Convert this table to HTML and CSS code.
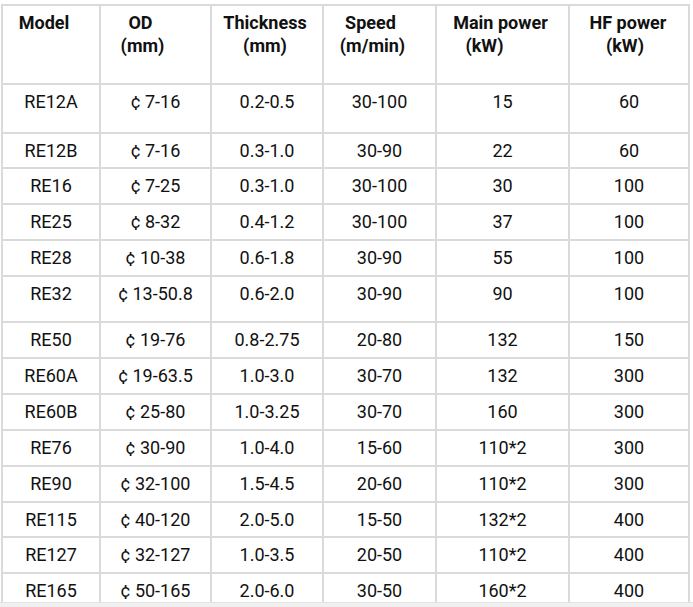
FILE: index.html
```html
<!DOCTYPE html>
<html>
<head>
<meta charset="utf-8">
<link rel="stylesheet" href="styles.css">
</head>
<body>
<div class="wrap">
<table class="spec">
<colgroup>
<col class="c1"><col class="c2"><col class="c3"><col class="c4"><col class="c5"><col class="c6">
</colgroup>
<tr class="head">
<th><span class="l sh7">Model</span></th>
<th><span class="l sh14">OD</span><span class="l sh13">(mm)</span></th>
<th><span class="l sh2">Thickness</span><span class="l sh2">(mm)</span></th>
<th><span class="l sh9">Speed</span><span class="l sh7">(m/min)</span></th>
<th><span class="l sh2">Main power</span><span class="l sh18">(kW)</span></th>
<th><span class="l sh1">HF power</span><span class="l sh4">(kW)</span></th>
</tr>
<tr class="tall1"><td>RE12A</td><td>¢ 7-16</td><td>0.2-0.5</td><td>30-100</td><td>15</td><td>60</td></tr>
<tr class="r35"><td>RE12B</td><td>¢ 7-16</td><td>0.3-1.0</td><td>30-90</td><td>22</td><td>60</td></tr>
<tr><td>RE16</td><td>¢ 7-25</td><td>0.3-1.0</td><td>30-100</td><td>30</td><td>100</td></tr>
<tr><td>RE25</td><td>¢ 8-32</td><td>0.4-1.2</td><td>30-100</td><td>37</td><td>100</td></tr>
<tr><td>RE28</td><td>¢ 10-38</td><td>0.6-1.8</td><td>30-90</td><td>55</td><td>100</td></tr>
<tr class="tall2"><td>RE32</td><td>¢ 13-50.8</td><td>0.6-2.0</td><td>30-90</td><td>90</td><td>100</td></tr>
<tr><td>RE50</td><td>¢ 19-76</td><td>0.8-2.75</td><td>20-80</td><td>132</td><td>150</td></tr>
<tr><td>RE60A</td><td>¢ 19-63.5</td><td>1.0-3.0</td><td>30-70</td><td>132</td><td>300</td></tr>
<tr><td>RE60B</td><td>¢ 25-80</td><td>1.0-3.25</td><td>30-70</td><td>160</td><td>300</td></tr>
<tr><td>RE76</td><td>¢ 30-90</td><td>1.0-4.0</td><td>15-60</td><td>110*2</td><td>300</td></tr>
<tr><td>RE90</td><td>¢ 32-100</td><td>1.5-4.5</td><td>20-60</td><td>110*2</td><td>300</td></tr>
<tr class="r35"><td>RE115</td><td>¢ 40-120</td><td>2.0-5.0</td><td>15-50</td><td>132*2</td><td>400</td></tr>
<tr><td>RE127</td><td>¢ 32-127</td><td>1.0-3.5</td><td>20-50</td><td>110*2</td><td>400</td></tr>
<tr><td>RE165</td><td>¢ 50-165</td><td>2.0-6.0</td><td>30-50</td><td>160*2</td><td>400</td></tr>
</table>
</div>
<div class="hscroll"></div>
</body>
</html>
```

FILE: styles.css
```css
html, body {
  margin: 0;
  padding: 0;
  background: #ffffff;
  overflow: hidden;
}
body {
  font-family: Roboto, "Liberation Sans", sans-serif;
  font-size: 18px;
  color: #111111;
}
.wrap {
  padding: 4px 0 0 1px;
}
.spec {
  border-collapse: collapse;
  table-layout: fixed;
  width: 689px;
}
.c1 { width: 98px; }
.c2 { width: 111px; }
.c3 { width: 112px; }
.c4 { width: 113px; }
.c5 { width: 133px; }
.c6 { width: 120px; }
.spec th,
.spec td {
  border: 2px solid #dadada;
  padding: 5px 2px 0;
  line-height: 23px;
  vertical-align: top;
  text-align: center;
  box-sizing: border-box;
}
.spec th {
  font-weight: 700;
  color: #111111;
}
.spec tr { height: 36px; }
.spec tr.head { height: 79px; }
.spec tr.tall1 { height: 49px; }
.spec tr.tall2 { height: 46px; }
.spec tr.r35 { height: 35px; }
.l { display: block; }
.sh1 { padding-right: 2px; }
.sh2 { padding-right: 4px; }
.sh4 { padding-right: 8px; }
.sh7 { padding-right: 14px; }
.sh9 { padding-right: 18px; }
.sh13 { padding-right: 26px; }
.sh14 { padding-right: 30px; }
.sh18 { padding-right: 36px; }
.hscroll {
  position: fixed;
  left: 0;
  right: 0;
  bottom: 0;
  height: 4px;
  background: #f0f0f0;
  border-top: 1px solid #e4e4e4;
}
```
